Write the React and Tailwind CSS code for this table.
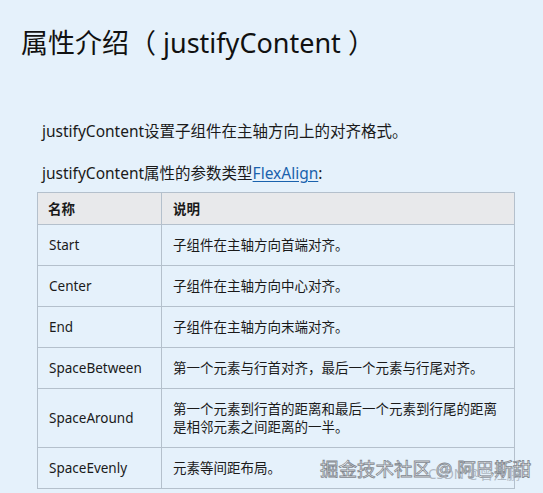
import React from 'react';

const rows = [
  { name: 'Start', desc: '子组件在主轴方向首端对齐。', h: 'h-[41px]' },
  { name: 'Center', desc: '子组件在主轴方向中心对齐。', h: 'h-[41px]' },
  { name: 'End', desc: '子组件在主轴方向末端对齐。', h: 'h-[41px]' },
  { name: 'SpaceBetween', desc: '第一个元素与行首对齐，最后一个元素与行尾对齐。', h: 'h-[41px]' },
  { name: 'SpaceAround', desc: '第一个元素到行首的距离和最后一个元素到行尾的距离是相邻元素之间距离的一半。', h: 'h-[59px]' },
  { name: 'SpaceEvenly', desc: '元素等间距布局。', h: 'h-[41px]' },
];

const font = { fontFamily: '"Noto Sans", "Noto Sans CJK SC", sans-serif' };

export default function App() {
  return (
    <div className="relative w-[543px] h-[493px] overflow-hidden bg-[#e5f1fb] text-[#1a1a1a]" style={font}>
      <h1 className="pl-[21px] pt-[23px] text-[27px] leading-[40px] font-normal text-[#111]">
        属性介绍（ justifyContent ）
      </h1>
      <div className="pl-[42px] pt-[57px]">
        <p className="text-[15.5px] leading-[22px]">justifyContent设置子组件在主轴方向上的对齐格式。</p>
        <p className="mt-[20px] text-[15.5px] leading-[22px]">
          justifyContent属性的参数类型
          <span className="text-[#1a62ad] underline underline-offset-2">FlexAlign</span>:
        </p>
      </div>
      <table className="ml-[37px] mt-[8px] w-[478px] border-collapse text-[13.5px] leading-[18px]">
        <thead>
          <tr className="h-[32px] bg-[#e8e9eb]">
            <th className="w-[124px] border border-[#b4c0cc] pl-[10px] text-left font-bold">名称</th>
            <th className="border border-[#b4c0cc] pl-[11px] text-left font-bold">说明</th>
          </tr>
        </thead>
        <tbody>
          {rows.map((r) => (
            <tr key={r.name} className={r.h}>
              <td className="border border-[#b4c0cc] pl-[11px]">{r.name}</td>
              <td className="border border-[#b4c0cc] pl-[11px] pr-[14px]">{r.desc}</td>
            </tr>
          ))}
        </tbody>
      </table>
      <div
        className="absolute left-[320px] top-[456px] whitespace-nowrap text-[18.5px] leading-[26px] text-white"
        style={{ WebkitTextStroke: '0.8px #80868e' }}
      >
        掘金技术社区 @ 阿巴斯甜
      </div>
      <div className="absolute left-[428px] top-[465px] whitespace-nowrap text-[13.5px] leading-[18px] text-[#a3abb5] opacity-80">
        CSDN @曾江鹏
      </div>
    </div>
  );
}
